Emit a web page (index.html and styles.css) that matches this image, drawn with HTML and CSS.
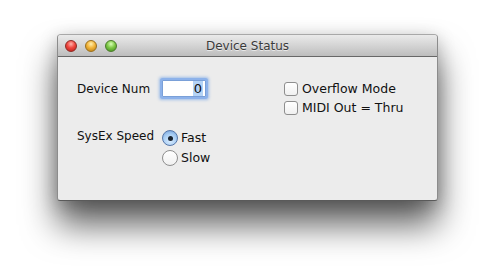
FILE: index.html
```html
<!DOCTYPE html>
<html>
<head>
<meta charset="utf-8">
<link rel="stylesheet" href="styles.css">
</head>
<body>
<div class="stage">
  <div class="window">
    <div class="titlebar">
      <div class="lights">
        <span class="light red"></span>
        <span class="light yellow"></span>
        <span class="light green"></span>
      </div>
      <div class="title">Device Status</div>
    </div>
    <div class="content">
      <div class="left">
        <div class="row num-row">
          <span class="label">Device Num</span>
          <span class="field"><span class="sel">0</span></span>
        </div>
        <div class="row speed-row">
          <span class="label">SysEx Speed</span>
          <div class="radios">
            <div class="radio-item"><span class="radio on"></span><span>Fast</span></div>
            <div class="radio-item"><span class="radio"></span><span>Slow</span></div>
          </div>
        </div>
      </div>
      <div class="right">
        <div class="check-item"><span class="check"></span><span>Overflow Mode</span></div>
        <div class="check-item"><span class="check"></span><span>MIDI Out = Thru</span></div>
      </div>
    </div>
  </div>
</div>
</body>
</html>
```

FILE: styles.css
```css
html, body {
  margin: 0;
  padding: 0;
  background: #ffffff;
}
.stage {
  box-sizing: border-box;
  height: 280px;
  overflow: hidden;
  padding: 34px 0 0 57px;
  font-family: "DejaVu Sans", "Liberation Sans", sans-serif;
  font-size: 12px;
  color: #111;
}
.window {
  width: 381px;
  height: 167px;
  box-sizing: border-box;
  background: #ececec;
  border-radius: 4px 4px 3px 3px;
  border: 1px solid #8c8c8c;
  border-top-color: #a8a8a8;
  border-bottom-color: #5a5a5a;
  box-shadow: 0 24px 34px rgba(0,0,0,0.62), 0 4px 18px rgba(0,0,0,0.22);
  display: flex;
  flex-direction: column;
  overflow: hidden;
}
.titlebar {
  height: 21px;
  flex: none;
  background: linear-gradient(#eaeaea, #d4d4d4 50%, #bdbdbd);
  border-bottom: 1px solid #676767;
  display: flex;
  align-items: center;
  position: relative;
}
.lights {
  display: flex;
  gap: 8px;
  padding-left: 7px;
}
.light {
  width: 12px;
  height: 12px;
  border-radius: 50%;
  box-sizing: border-box;
}
.red {
  background: radial-gradient(circle at 50% 30%, #ffb3ad 0, #f0473f 45%, #b71c16 100%);
  border: 1px solid #8e2a24;
}
.yellow {
  background: radial-gradient(circle at 50% 30%, #fff0b0 0, #f3b53a 45%, #b57a10 100%);
  border: 1px solid #9a6f1c;
}
.green {
  background: radial-gradient(circle at 50% 30%, #d9ffb8 0, #7fc946 45%, #3d8a1c 100%);
  border: 1px solid #4a7b2a;
}
.title {
  position: absolute;
  left: 0;
  right: 0;
  top: 4px;
  text-align: center;
  font-size: 12px;
  color: #3a3a3a;
  text-shadow: 0 1px 0 rgba(255,255,255,0.6);
  pointer-events: none;
}
.content {
  display: grid;
  grid-template-columns: 207px 1fr;
  padding: 20px 0 0 19px;
}
.left {
  display: flex;
  flex-direction: column;
  gap: 26px;
}
.row {
  display: grid;
  grid-template-columns: 82px auto;
}
.num-row {
  align-items: center;
}
.label {
  line-height: 16px;
}
.speed-row .label {
  margin-top: 2px;
}
.field {
  width: 44px;
  height: 17px;
  box-sizing: border-box;
  margin: 3px;
  background: #fff;
  border: 1px solid #7aa0d8;
  box-shadow: 0 0 0 2px #8db2ea, 0 0 3px 3px rgba(110,160,230,0.6);
  border-radius: 1px;
  display: flex;
  justify-content: flex-end;
  align-items: center;
  padding-right: 2px;
  font-size: 13px;
}
.sel {
  background: #b4d3f6;
  line-height: 15px;
  padding: 0 1px;
}
.radios {
  display: flex;
  flex-direction: column;
  gap: 4px;
  padding-top: 4px;
  margin-left: 3px;
}
.radio-item, .check-item {
  display: flex;
  align-items: center;
  gap: 3px;
  line-height: 16px;
  font-size: 12.5px;
}
.radio {
  width: 16px;
  height: 16px;
  box-sizing: border-box;
  border-radius: 50%;
  border: 1px solid #8e8e8e;
  background: linear-gradient(#ffffff, #f0f0f0);
  display: flex;
  align-items: center;
  justify-content: center;
}
.radio.on {
  border-color: #5676a8;
  background: radial-gradient(circle at 50% 70%, #d8ecff 0, #a8cdf3 55%, #6b9ad6 100%);
}
.radio.on::after {
  content: "";
  width: 5px;
  height: 5px;
  border-radius: 50%;
  background: #1b2430;
}
.right {
  display: flex;
  flex-direction: column;
  gap: 3px;
  padding-top: 4px;
}
.check {
  width: 14px;
  height: 14px;
  box-sizing: border-box;
  border: 1px solid #8e8e8e;
  border-radius: 3px;
  background: linear-gradient(#ffffff, #f0f0f0);
}
.check-item {
  gap: 4px;
}
```
